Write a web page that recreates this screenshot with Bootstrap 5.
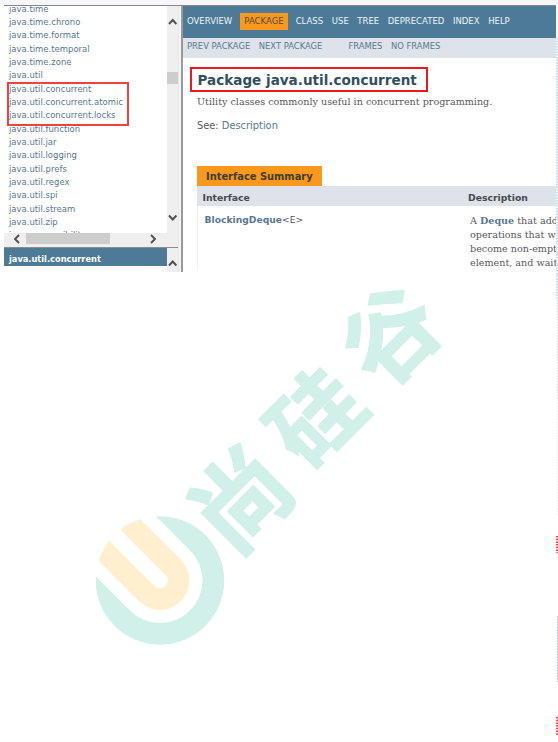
<!DOCTYPE html>
<html lang="en">
<head>
<meta charset="utf-8">
<meta name="viewport" content="width=device-width, initial-scale=1">
<title>Package java.util.concurrent</title>
<link href="https://cdn.jsdelivr.net/npm/bootstrap@5.3.0/dist/css/bootstrap.min.css" rel="stylesheet">
<style>
body{width:558px;height:742px;overflow:hidden;background:#fff;font-family:"DejaVu Sans",sans-serif;font-size:8.48px;color:#56595b;padding-top:5px}
a{color:#587890;text-decoration:none}
.doc-window{width:552px;height:267px;margin-left:4px;border-top:1px solid #85888c}
.side{width:174px;background:#efefef}
.pkg-pane{height:242px;border-bottom:1px solid #8c8c8c}
.pkg-view{height:227px}
.pkg-list{width:163px;background:#fff;padding-left:5px;margin:0}
.pkg-list li{height:13.33px;line-height:13.33px;white-space:nowrap}
.pkg-list ul{margin-top:-3.4px}
.vbar{width:11px}
.vbar .thumb{width:11px;height:12px;background:#cdcdcd;margin-top:40px}
.vbar svg,.hbar svg{display:block;fill:none;stroke:#505050;stroke-width:1.9}
.hbar{height:12px;padding:0 11px 0 8px}
.hbar .thumb{width:82px;height:11px;background:#cdcdcd;margin-left:4px}
.class-title{width:163px;height:18px;line-height:22px;background:#4d7a97;color:#fff;font-weight:700;padding-left:5px;font-size:8.25px}
.class-body{width:163px;height:26px;background:#fff}
.split{width:5px;border-right:2px solid #999;border-left:1px solid #e8e8e8;background:#f4f4f4}
.topnav{height:31.5px;background:#4d7a97;font-size:8.5px;gap:8.6px;padding-left:4px}
.topnav a{color:#edf3f7}
.topnav .current{background:#f8981d;color:#5a4a30;height:17px;line-height:17px;padding:0 4.5px;margin:0 -1px}
.subnav{height:20.5px;background:#dee3e9;padding:0 0 3px 4px;font-size:8.4px;gap:8.6px}
.subnav a{color:#5a7890}
.frames-link{margin-left:17.5px}
.main-pane{width:373px}
.pane-body{padding:9px 0 0 7px}
.pkg-heading{width:238px;height:25px;border:2px solid #f1161c;font-size:13.55px;font-weight:700;line-height:23px;color:#33505f;padding-left:5.5px;margin:0}
.serif{font-family:"DejaVu Serif",serif;font-size:9.6px}
.intro{padding-left:7px;margin-top:2.5px;line-height:14px}
.see{font-size:9.85px;line-height:14px;margin:10.5px 0 0 7px}
.summary{margin:33px 0 0 7px}
.caption-tab{width:125px;height:20px;line-height:22px;background:#f8981d;color:#463c2c;font-weight:700;font-size:9.9px;padding-left:9px}
.summary-head{height:20px;line-height:23px;background:#dee3e9;font-weight:700;font-size:9.25px;color:#45494d;padding-left:5.5px}
.summary-row{border-left:1px solid #eee;padding-left:6.5px}
.col-a{width:265.5px}
.name-cell{width:265.5px;padding-top:6.5px;line-height:13px;font-size:9.2px}
.desc{line-height:14px;padding-top:8px}
.hl-box{position:absolute;left:3px;top:76px;width:122px;height:44px;border:2px solid #f34040}
.wm{position:absolute;left:0;top:0;pointer-events:none}
.wm text{font-family:"Noto Sans CJK SC",sans-serif;font-weight:700;font-size:93px;text-anchor:middle;fill:#d1f0e9;stroke:#d1f0e9;stroke-width:1.6;stroke-linejoin:round}
</style>
<script src="https://cdn.jsdelivr.net/npm/bootstrap@5.3.0/dist/js/bootstrap.bundle.min.js"></script>
</head>
<body class="position-relative">
<div class="doc-window d-flex overflow-hidden position-relative">
  <aside class="side flex-shrink-0">
    <div class="pkg-pane">
      <div class="pkg-view d-flex">
        <div class="pkg-list overflow-hidden">
          <ul class="list-unstyled mb-0">
            <li><a href="#">java.time</a></li><li><a href="#">java.time.chrono</a></li><li><a href="#">java.time.format</a></li><li><a href="#">java.time.temporal</a></li><li><a href="#">java.time.zone</a></li><li><a href="#">java.util</a></li><li><a href="#">java.util.concurrent</a></li><li><a href="#">java.util.concurrent.atomic</a></li><li><a href="#">java.util.concurrent.locks</a></li><li><a href="#">java.util.function</a></li><li><a href="#">java.util.jar</a></li><li><a href="#">java.util.logging</a></li><li><a href="#">java.util.prefs</a></li><li><a href="#">java.util.regex</a></li><li><a href="#">java.util.spi</a></li><li><a href="#">java.util.stream</a></li><li><a href="#">java.util.zip</a></li><li><a href="#">javax.accessibility</a></li>
          </ul>
        </div>
        <div class="vbar d-flex flex-column">
          <svg class="mt-2" width="11" height="18"><path d="M2 10 5.7 6 9.4 10"/></svg>
          <div class="thumb"></div>
          <svg class="mt-auto mb-2" width="11" height="14"><path d="M2 4.5 5.7 8.5 9.4 4.5"/></svg>
        </div>
      </div>
      <div class="hbar d-flex">
        <svg width="10" height="12"><path d="M7 2 3 6l4 4"/></svg>
        <div class="thumb flex-grow-1 me-4"></div>
        <svg class="ms-3 me-2" width="9" height="12"><path d="M1 2l4 4-4 4"/></svg>
      </div>
    </div>
    <div class="d-flex">
      <div class="class-body"><div class="class-title">java.util.concurrent</div></div>
      <div class="vbar"><svg width="11" height="22"><path d="M2 17.5 5.7 13.5 9.4 17.5"/></svg></div>
    </div>
  </aside>
  <div class="split flex-shrink-0"></div>
  <main class="main-pane flex-shrink-0 overflow-hidden">
    <nav class="topnav d-flex align-items-center">
      <a href="#">OVERVIEW</a><span class="current">PACKAGE</span><a href="#">CLASS</a><a href="#">USE</a><a href="#">TREE</a><a href="#">DEPRECATED</a><a href="#">INDEX</a><a href="#">HELP</a>
    </nav>
    <div class="subnav d-flex align-items-center">
      <a href="#">PREV PACKAGE</a><a href="#">NEXT PACKAGE</a><a href="#" class="frames-link">FRAMES</a><a href="#">NO FRAMES</a>
    </div>
    <div class="pane-body">
      <h1 class="pkg-heading text-nowrap">Package java.util.concurrent</h1>
      <div class="intro serif">Utility classes commonly useful in concurrent programming.</div>
      <div class="see">See: <a href="#">Description</a></div>
      <section class="summary">
        <div class="caption-tab">Interface Summary</div>
        <div class="summary-head d-flex"><div class="col-a">Interface</div><div>Description</div></div>
        <div class="summary-row d-flex">
          <div class="name-cell flex-shrink-0"><a href="#" class="fw-bold">BlockingDeque</a>&lt;E&gt;</div>
          <div class="desc serif text-nowrap">A <a href="#" class="fw-bold">Deque</a> that add<br>operations that w<br>become non-empt<br>element, and wait</div>
        </div>
      </section>
    </div>
  </main>
  <div class="hl-box"></div>
</div>
<svg class="wm" width="558" height="742" viewBox="0 0 558 742">
  <defs><clipPath id="disc"><circle r="64.5"/></clipPath></defs>
  <g transform="translate(160 580.5) rotate(-45)" clip-path="url(#disc)">
    <circle r="64.3" fill="#d1f0e9"/>
    <path d="M-42.5-70V0a42.5 42.5 0 0 0 85 0V-70z" fill="#fff"/>
    <path d="M-29.5-70V0a29.5 29.5 0 0 0 59 0V-70z" fill="#ffefcf"/>
    <path d="M-7.8-70V0a7.8 7.8 0 0 0 15.6 0V-70z" fill="#fff"/>
  </g>
  <text transform="translate(241 499) rotate(-45) scale(1.04)" y="35">尚</text>
  <text transform="translate(316 417) rotate(-45) scale(.97)" y="35">硅</text>
  <text transform="translate(391 335) rotate(-45)" y="35">谷</text>
  <g fill="none" stroke-dasharray="1.5 1.2">
    <path d="M557 38V300" stroke="#8dbfd3"/>
    <path d="M557.5 300V400" stroke="#ced8e3"/>
    <path d="M557.5 400V515" stroke="#eaf2f2"/>
    <path d="M557 536V553" stroke="#f04848" stroke-width="2"/>
    <path d="M557.5 616V682" stroke="#b5c4d4"/>
    <path d="M557 717V735" stroke="#f04848" stroke-width="2"/>
  </g>
  <path d="M0 2.5H558" stroke="#f7f7fb" stroke-width="5"/>
</svg>
</body>
</html>
